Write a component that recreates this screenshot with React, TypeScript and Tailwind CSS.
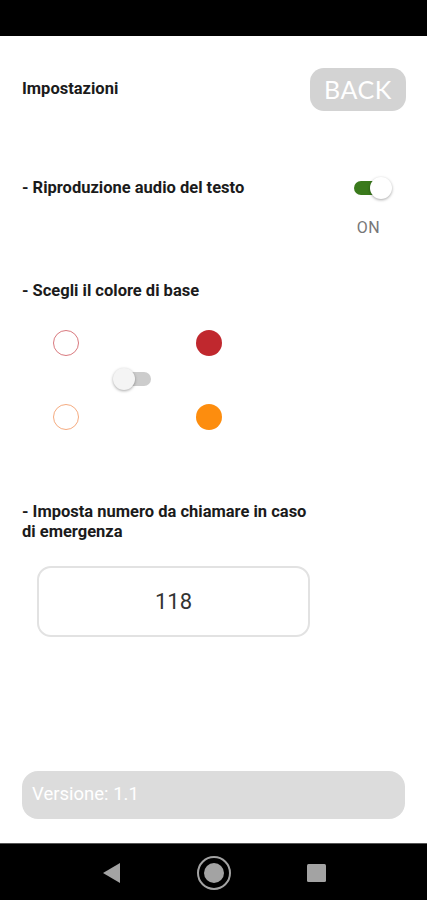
import { useState } from "react"

const Toggle = ({ on, onClick }: { on: boolean; onClick?: () => void }) => (
  <button type="button" onClick={onClick} className="relative w-[40px] h-[22px] flex items-center">
    <span className={"block h-[14px] w-[36px] ml-[2px] rounded-full " + (on ? "bg-[#3a7a1c]" : "bg-[#cccccc]")}></span>
    <span
      className={
        "absolute top-0 h-[22px] w-[22px] rounded-full shadow-[0_1px_3px_rgba(0,0,0,0.35)] " +
        (on ? "right-0 bg-white" : "left-0 bg-[#f4f4f4]")
      }
    ></span>
  </button>
)

export default function App() {
  const [audio, setAudio] = useState<boolean>(true)
  const [palette, setPalette] = useState<boolean>(false)
  const [numero, setNumero] = useState<string>("118")

  return (
    <div className="h-screen w-full flex flex-col bg-white font-['Roboto','Liberation_Sans',sans-serif] text-[#1b1b1b]">
      {/* status bar */}
      <div className="h-[36px] bg-black shrink-0"></div>

      <div className="flex-1 flex flex-col px-[22px]">
        {/* header */}
        <div className="mt-[32px] flex items-center justify-between h-[43px]">
          <div className="text-[16.5px] font-bold">Impostazioni</div>
          <button type="button" className="w-[96px] h-[43px] rounded-[14px] bg-[#d3d3d3] text-white text-[25px] tracking-wide font-['Lato','Roboto',sans-serif] mr-[-1px]">
            BACK
          </button>
        </div>

        {/* audio */}
        <div className="mt-[66px] flex items-center justify-between h-[22px]">
          <div className="text-[16.5px] font-bold">- Riproduzione audio del testo</div>
          <div className="mr-[13px]">
            <Toggle on={audio} onClick={() => setAudio(!audio)} />
          </div>
        </div>
        <div className="mt-[19px] flex justify-end">
          <span className="mr-[25px] text-[16px] leading-[20px] text-[#777777] tracking-wide">{audio ? "ON" : "OFF"}</span>
        </div>

        {/* colore */}
        <div className="mt-[43px] text-[16.5px] leading-[20px] font-bold">- Scegli il colore di base</div>
        <div className="mt-[29px] ml-[31px] flex flex-col">
          <div className="flex h-[26px]">
            <span className="w-[26px] h-[26px] rounded-full border-[1.5px] border-[#d9797e]"></span>
            <span className="ml-[117px] w-[26px] h-[26px] rounded-full bg-[#c0282e]"></span>
          </div>
          <div className="mt-[12px] ml-[60px]">
            <Toggle on={palette} onClick={() => setPalette(!palette)} />
          </div>
          <div className="mt-[14px] flex h-[26px]">
            <span className="w-[26px] h-[26px] rounded-full border-[1.5px] border-[#f5ab80]"></span>
            <span className="ml-[117px] w-[26px] h-[26px] rounded-full bg-[#fd8d0e]"></span>
          </div>
        </div>

        {/* emergenza */}
        <div className="mt-[72px] text-[16.5px] leading-[20px] font-bold">
          - Imposta numero da chiamare in caso
          <br />
          di emergenza
        </div>
        <input
          value={numero}
          onChange={(e) => setNumero(e.target.value)}
          className="mt-[24px] ml-[15px] w-[273px] h-[71px] rounded-[14px] border-2 border-[#e2e2e2] text-center text-[22px] text-[#333333] outline-none"
        />

        {/* versione */}
        <div className="mt-auto mb-[24px] h-[48px] rounded-[16px] bg-[#dcdcdc] flex items-center px-[10px] text-white text-[18.5px]">
          Versione: 1.1
        </div>
      </div>

      {/* navigation bar */}
      <div className="h-[57px] bg-black shrink-0 border-t border-[#555555] flex items-center">
        <svg width="427" height="57" viewBox="0 0 427 57">
          <polygon points="120,19 120,39 103,29" fill="#a3a3a3" />
          <circle cx="214" cy="29" r="16" fill="none" stroke="#a3a3a3" strokeWidth="2" />
          <circle cx="214" cy="29" r="10" fill="#a3a3a3" />
          <rect x="307" y="20" width="19" height="18" rx="1.5" fill="#a3a3a3" />
        </svg>
      </div>
    </div>
  )
}
